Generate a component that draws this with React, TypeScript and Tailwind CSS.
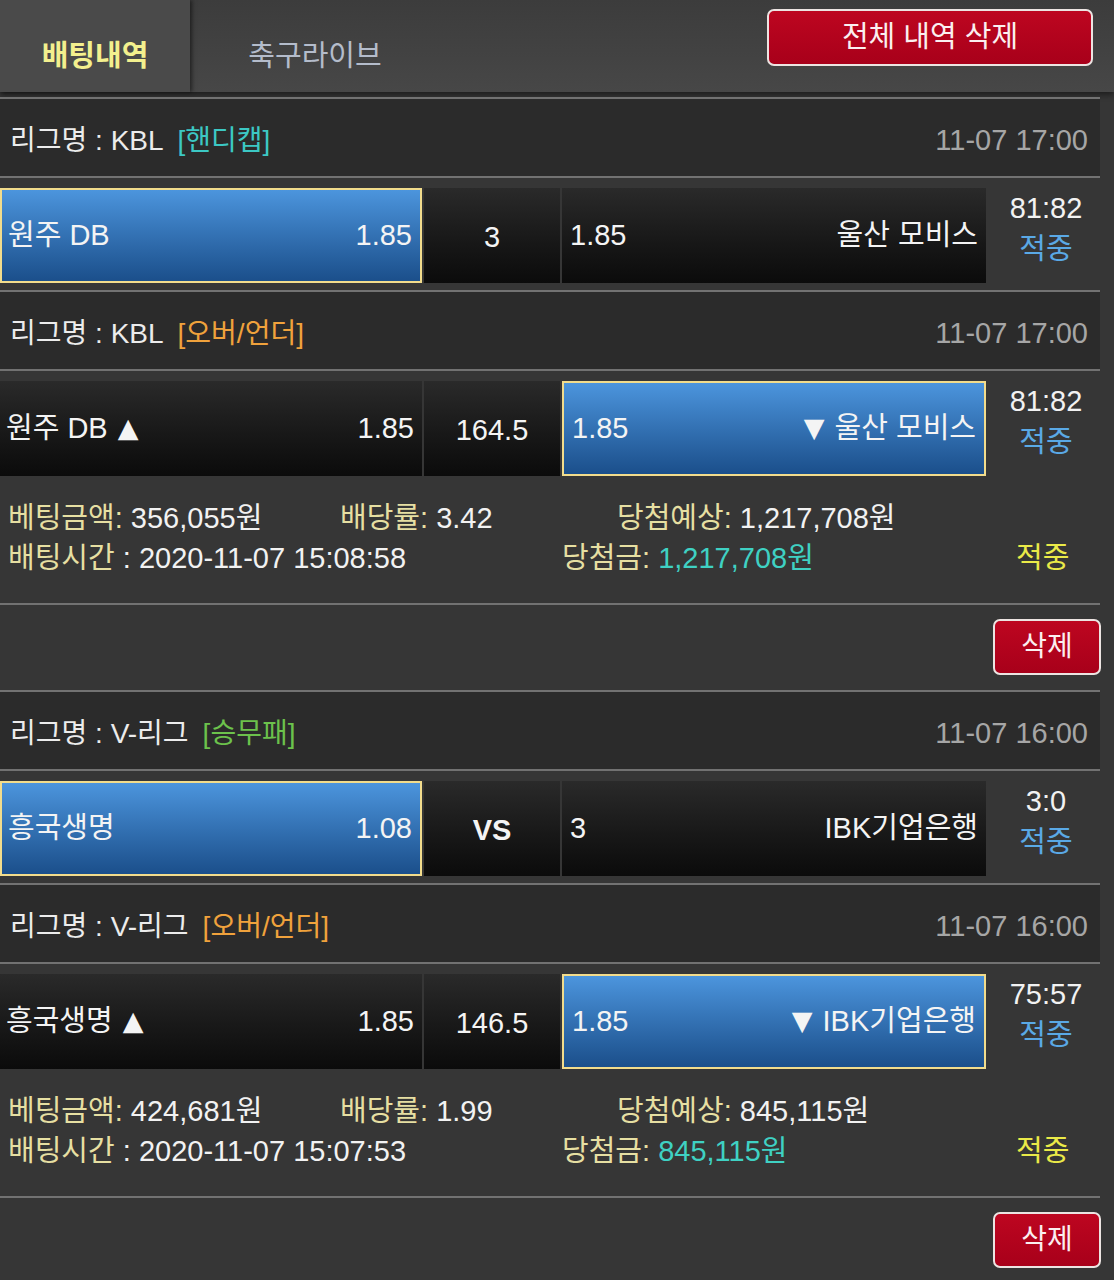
import React from 'react';

type Cell = { team: string; odds: string; arrow?: '▲' | '▼' };

interface Line {
  league: string;
  tag: string;
  tagColor: string;
  time: string;
  home: Cell;
  mid: string;
  midBold?: boolean;
  away: Cell;
  pick: 'home' | 'away';
  score: string;
}

interface Bet {
  lines: Line[];
  amount: string;
  rate: string;
  expect: string;
  betTime: string;
  win: string;
}

const bets: Bet[] = [
  {
    lines: [
      {
        league: 'KBL', tag: '[핸디캡]', tagColor: 'text-[#3cc8c4]', time: '11-07 17:00',
        home: { team: '원주 DB', odds: '1.85' }, mid: '3', away: { team: '울산 모비스', odds: '1.85' },
        pick: 'home', score: '81:82',
      },
      {
        league: 'KBL', tag: '[오버/언더]', tagColor: 'text-[#f0a23c]', time: '11-07 17:00',
        home: { team: '원주 DB', odds: '1.85', arrow: '▲' }, mid: '164.5', away: { team: '울산 모비스', odds: '1.85', arrow: '▼' },
        pick: 'away', score: '81:82',
      },
    ],
    amount: '356,055원', rate: '3.42', expect: '1,217,708원', betTime: '2020-11-07 15:08:58', win: '1,217,708원',
  },
  {
    lines: [
      {
        league: 'V-리그', tag: '[승무패]', tagColor: 'text-[#6cc24c]', time: '11-07 16:00',
        home: { team: '흥국생명', odds: '1.08' }, mid: 'VS', midBold: true, away: { team: 'IBK기업은행', odds: '3' },
        pick: 'home', score: '3:0',
      },
      {
        league: 'V-리그', tag: '[오버/언더]', tagColor: 'text-[#f0a23c]', time: '11-07 16:00',
        home: { team: '흥국생명', odds: '1.85', arrow: '▲' }, mid: '146.5', away: { team: 'IBK기업은행', odds: '1.85', arrow: '▼' },
        pick: 'away', score: '75:57',
      },
    ],
    amount: '424,681원', rate: '1.99', expect: '845,115원', betTime: '2020-11-07 15:07:53', win: '845,115원',
  },
];

const FONT = "font-['Liberation_Sans','Noto_Sans_CJK_KR',sans-serif]";
const picked = 'bg-gradient-to-b from-[#4c95dd] to-[#1b4f8b] border-2 border-[#f2dc8c]';
const plain = 'bg-gradient-to-b from-[#2a2a2a] to-[#0b0b0b]';

function Rule() {
  return <div className="h-[2px] bg-[#727272]" />;
}

function DeleteButton({ label, className }: { label: string; className: string }) {
  return (
    <button className={`flex items-center justify-center rounded-[7px] border-2 border-[#ece4e2] bg-gradient-to-b from-[#bd0620] to-[#a8001a] text-[#fbeff0] ${className}`}>
      {label}
    </button>
  );
}

function LineRow({ line, first }: { line: Line; first: boolean }) {
  const homePicked = line.pick === 'home';
  return (
    <div className={first ? '' : 'mt-[7px]'}>
      <Rule />
      <div className="h-[77px] bg-[#2b2b2b] flex items-center justify-between pl-[10px] pr-[12px] pt-[6px] text-[28px]">
        <div className="flex items-center">
          <span className="text-[#ececec]">리그명 : {line.league}</span>
          <span className={`ml-[14px] ${line.tagColor}`}>{line.tag}</span>
        </div>
        <span className="text-[#a6a6a6] text-[29px]">{line.time}</span>
      </div>
      <Rule />
      <div className="mt-[10px] h-[95px] flex gap-[2px] text-[29px] text-[#f4f4f4]">
        <div className={`w-[422px] flex items-center justify-between pl-[6px] pr-[8px] ${homePicked ? picked : plain}`}>
          <span className="flex items-center">{line.home.team}{line.home.arrow && <span className="ml-[10px] font-['DejaVu_Sans'] text-[27px]">{line.home.arrow}</span>}</span>
          <span>{line.home.odds}</span>
        </div>
        <div className={`w-[136px] flex items-center justify-center ${plain} ${line.midBold ? 'font-bold text-[29px]' : ''}`}>
          <span className="mt-[4px]">{line.mid}</span>
        </div>
        <div className={`w-[424px] flex items-center justify-between pl-[8px] pr-[8px] ${homePicked ? plain : picked}`}>
          <span>{line.away.odds}</span>
          <span className="flex items-center">{line.away.arrow && <span className="mr-[10px] font-['DejaVu_Sans'] text-[27px]">{line.away.arrow}</span>}{line.away.team}</span>
        </div>
        <div className="flex-1 flex flex-col items-center leading-[41px] pl-[4px]">
          <span className="text-[29px] text-[#f2f2f2]">{line.score}</span>
          <span className="text-[29px] text-[#5aa9e6]">적중</span>
        </div>
      </div>
    </div>
  );
}

function BetCard({ bet }: { bet: Bet }) {
  return (
    <div>
      {bet.lines.map((l, i) => (
        <LineRow key={i} line={l} first={i === 0} />
      ))}
      <div className="pt-[22px] pb-[25px] text-[29px] leading-[40px]">
        <div className="flex">
          <span className="w-[340px] pl-[8px]"><span className="text-[#e6dfa2]">베팅금액:</span> <span className="text-[#f2f2f2]">{bet.amount}</span></span>
          <span className="w-[277px]"><span className="text-[#e6dfa2]">배당률:</span> <span className="text-[#f2f2f2]">{bet.rate}</span></span>
          <span><span className="text-[#e6dfa2]">당첨예상:</span> <span className="text-[#f2f2f2]">{bet.expect}</span></span>
        </div>
        <div className="flex">
          <span className="w-[562px] pl-[8px]"><span className="text-[#e6dfa2]">배팅시간</span> <span className="text-[#f2f2f2]">: {bet.betTime}</span></span>
          <span className="w-[454px]"><span className="text-[#e6dfa2]">당첨금:</span> <span className="text-[#3fd1c3]">{bet.win}</span></span>
          <span className="text-[#eaea48]">적중</span>
        </div>
      </div>
      <Rule />
      <div className="h-[85px] flex justify-end items-start pt-[14px]">
        <DeleteButton label="삭제" className="w-[108px] h-[56px] text-[28px] -mr-[1px]" />
      </div>
    </div>
  );
}

export default function App() {
  return (
    <div className={`min-h-[1280px] w-[1114px] bg-[#363636] overflow-hidden ${FONT}`}>
      <div className="h-[92px] flex items-stretch bg-gradient-to-b from-[#3c3c3c] to-[#474747] shadow-[0_3px_6px_rgba(0,0,0,0.45)]">
        <div className="w-[190px] flex items-center justify-center bg-[#4a4a4a] shadow-[2px_0_4px_rgba(0,0,0,0.5)]">
          <span className="text-[29px] font-bold text-[#f3f08e] mt-[22px]">배팅내역</span>
        </div>
        <div className="w-[250px] flex items-center justify-center">
          <span className="text-[29px] text-[#b4bccb] mt-[22px]">축구라이브</span>
        </div>
        <div className="flex-1 flex justify-end items-start pt-[9px] pr-[21px]">
          <DeleteButton label="전체 내역 삭제" className="w-[326px] h-[57px] text-[29px]" />
        </div>
      </div>
      <div className="w-[1100px] pt-[5px]">
        {bets.map((b, i) => (
          <BetCard key={i} bet={b} />
        ))}
      </div>
    </div>
  );
}
